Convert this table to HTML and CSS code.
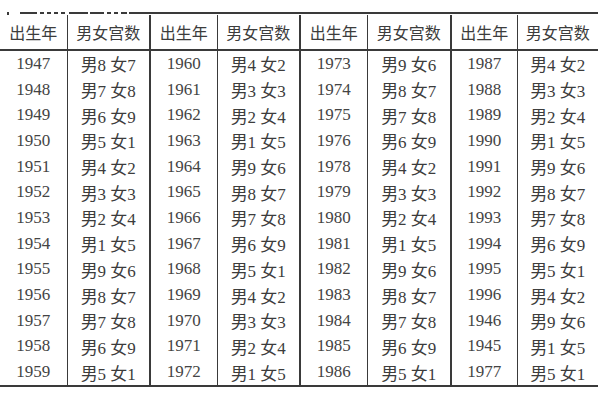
FILE: index.html
```html
<!DOCTYPE html>
<html lang="zh">
<head>
<meta charset="utf-8">
<link rel="stylesheet" href="styles.css">
</head>
<body>
<div class="rule">
  <span class="seg s-dot"></span>
  <span class="seg s1"></span>
  <span class="seg s2"></span>
  <span class="seg s2"></span>
  <span class="seg s2"></span>
  <span class="seg s2"></span>
  <span class="seg s3"></span>
  <span class="seg s4"></span>
  <span class="seg s2"></span>
  <span class="seg s2"></span>
  <span class="seg s5"></span>
  <span class="seg s-rest"></span>
</div>
<table class="tbl">
  <colgroup>
    <col class="c-year"><col class="c-num">
    <col class="c-year"><col class="c-num">
    <col class="c-year"><col class="c-num3">
    <col class="c-year4"><col class="c-num4">
  </colgroup>
  <thead>
    <tr>
      <th>出生年</th><th class="in">男女宫数</th>
      <th class="grp">出生年</th><th class="in">男女宫数</th>
      <th class="grp">出生年</th><th class="in">男女宫数</th>
      <th class="grp">出生年</th><th class="in">男女宫数</th>
    </tr>
  </thead>
  <tbody>
    <tr><td class="yr">1947</td><td class="in">男8 女7</td><td class="grp yr">1960</td><td class="in">男4 女2</td><td class="grp yr">1973</td><td class="in">男9 女6</td><td class="grp yr">1987</td><td class="in">男4 女2</td></tr>
    <tr><td class="yr">1948</td><td class="in">男7 女8</td><td class="grp yr">1961</td><td class="in">男3 女3</td><td class="grp yr">1974</td><td class="in">男8 女7</td><td class="grp yr">1988</td><td class="in">男3 女3</td></tr>
    <tr><td class="yr">1949</td><td class="in">男6 女9</td><td class="grp yr">1962</td><td class="in">男2 女4</td><td class="grp yr">1975</td><td class="in">男7 女8</td><td class="grp yr">1989</td><td class="in">男2 女4</td></tr>
    <tr><td class="yr">1950</td><td class="in">男5 女1</td><td class="grp yr">1963</td><td class="in">男1 女5</td><td class="grp yr">1976</td><td class="in">男6 女9</td><td class="grp yr">1990</td><td class="in">男1 女5</td></tr>
    <tr><td class="yr">1951</td><td class="in">男4 女2</td><td class="grp yr">1964</td><td class="in">男9 女6</td><td class="grp yr">1978</td><td class="in">男4 女2</td><td class="grp yr">1991</td><td class="in">男9 女6</td></tr>
    <tr><td class="yr">1952</td><td class="in">男3 女3</td><td class="grp yr">1965</td><td class="in">男8 女7</td><td class="grp yr">1979</td><td class="in">男3 女3</td><td class="grp yr">1992</td><td class="in">男8 女7</td></tr>
    <tr><td class="yr">1953</td><td class="in">男2 女4</td><td class="grp yr">1966</td><td class="in">男7 女8</td><td class="grp yr">1980</td><td class="in">男2 女4</td><td class="grp yr">1993</td><td class="in">男7 女8</td></tr>
    <tr><td class="yr">1954</td><td class="in">男1 女5</td><td class="grp yr">1967</td><td class="in">男6 女9</td><td class="grp yr">1981</td><td class="in">男1 女5</td><td class="grp yr">1994</td><td class="in">男6 女9</td></tr>
    <tr><td class="yr">1955</td><td class="in">男9 女6</td><td class="grp yr">1968</td><td class="in">男5 女1</td><td class="grp yr">1982</td><td class="in">男9 女6</td><td class="grp yr">1995</td><td class="in">男5 女1</td></tr>
    <tr><td class="yr">1956</td><td class="in">男8 女7</td><td class="grp yr">1969</td><td class="in">男4 女2</td><td class="grp yr">1983</td><td class="in">男8 女7</td><td class="grp yr">1996</td><td class="in">男4 女2</td></tr>
    <tr><td class="yr">1957</td><td class="in">男7 女8</td><td class="grp yr">1970</td><td class="in">男3 女3</td><td class="grp yr">1984</td><td class="in">男7 女8</td><td class="grp yr">1946</td><td class="in">男9 女6</td></tr>
    <tr><td class="yr">1958</td><td class="in">男6 女9</td><td class="grp yr">1971</td><td class="in">男2 女4</td><td class="grp yr">1985</td><td class="in">男6 女9</td><td class="grp yr">1945</td><td class="in">男1 女5</td></tr>
    <tr><td class="yr">1959</td><td class="in">男5 女1</td><td class="grp yr">1972</td><td class="in">男1 女5</td><td class="grp yr">1986</td><td class="in">男5 女1</td><td class="grp yr">1977</td><td class="in">男5 女1</td></tr>
  </tbody>
</table>
</body>
</html>
```

FILE: styles.css
```css
html, body {
  margin: 0;
  padding: 0;
  background: #ffffff;
}

body {
  width: 600px;
  height: 400px;
  overflow: hidden;
  color: #3c3c3c;
  font-family: "Liberation Serif", "Noto Sans CJK SC", serif;
}

.rule {
  display: flex;
  align-items: flex-start;
  height: 3px;
  margin-top: 12px;
  width: 598px;
}

.seg {
  display: block;
  height: 2px;
  background: #3a3a3a;
}

.s-dot { width: 2px; height: 3px; margin-left: 7px; margin-right: 11px; }
.s1 { width: 17px; margin-right: 3px; }
.s2 { width: 4px; margin-right: 3px; }
.s3 { width: 19px; margin-right: 2px; margin-left: 1px; }
.s4 { width: 14px; margin-right: 3px; }
.s5 { width: 6px; margin-right: 2px; }
.s-rest { flex: 1; }

.tbl {
  border-collapse: collapse;
  table-layout: fixed;
  width: 598px;
}

.c-year { width: 67px; }
.c-num { width: 83px; }
.c-num3 { width: 84px; }
.c-year4 { width: 66px; }
.c-num4 { width: 81px; }

.tbl th {
  height: 34px;
  padding: 0;
  font-family: "Noto Sans CJK SC", sans-serif;
  font-weight: normal;
  font-size: 16px;
  color: #3c3c3c;
  border-bottom: 2px solid #3a3a3a;
  text-align: center;
  vertical-align: middle;
}

.tbl td {
  height: 25.7px;
  padding: 0;
  font-size: 17px;
  text-align: center;
  vertical-align: middle;
  white-space: nowrap;
}

.tbl td.yr {
  font-size: 17px;
  color: #444444;
}

.tbl tbody tr:last-child td {
  border-bottom: 2px solid #3a3a3a;
}

.tbl .in {
  border-left: 1px solid #3a3a3a;
}

.tbl .grp {
  border-left: 2px solid #3a3a3a;
}
```
